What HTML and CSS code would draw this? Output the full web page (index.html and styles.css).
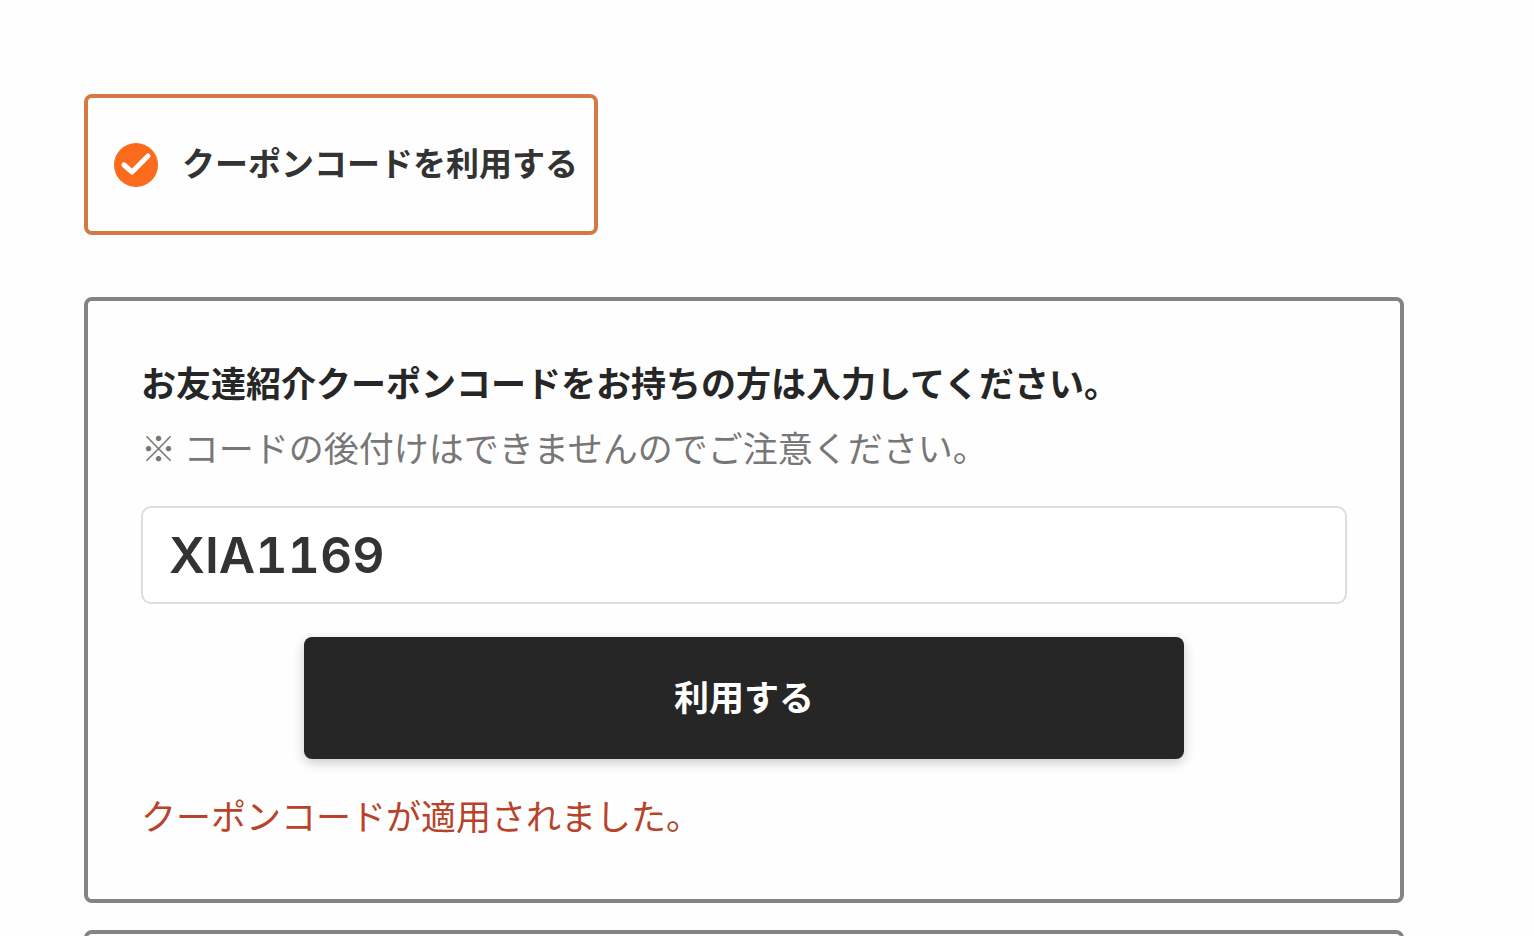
FILE: index.html
```html
<!DOCTYPE html>
<html lang="ja">
  <head>
    <meta charset="UTF-8">
    <meta name="viewport" content="width=device-width, initial-scale=1">
    <title>クーポンコード</title>
    <link rel="stylesheet" href="styles.css">
  </head>
  <body>
    <main class="container">
      <label class="coupon-toggle" for="use-coupon">
        <span class="check">
          <input class="check-input" type="checkbox" id="use-coupon" checked>
          <svg class="check-mark" viewBox="0 0 44 44" aria-hidden="true">
            <path d="M10 22 L18 29 L34 13" />
          </svg>
        </span>
        <span class="toggle-text">クーポンコードを利用する</span>
      </label>

      <form class="panel">
        <label class="panel-title" for="coupon-code">お友達紹介クーポンコードをお持ちの方は入力してください。</label>
        <p class="note">※ コードの後付けはできませんのでご注意ください。</p>
        <input class="code-input" type="text" id="coupon-code" value="XIA1169">
        <button class="apply-btn" type="button">利用する</button>
        <p class="message">クーポンコードが適用されました。</p>
      </form>

      <section class="panel"></section>
    </main>
  </body>
</html>
```

FILE: styles.css
```css
* {
  box-sizing: border-box;
}

body {
  margin: 0;
  background-color: #fefefe;
  color: #333;
  font-family: "Noto Sans CJK JP", sans-serif;
  font-size: 35px;
  line-height: 52px;
}

.container {
  display: flex;
  flex-direction: column;
  align-items: flex-start;
  padding: 94px 130px 0 84px;
}

.coupon-toggle {
  display: flex;
  align-items: center;
  gap: 24px;
  min-height: 141px;
  margin-bottom: 62px;
  padding: 0 16px 0 26px;
  border: 4px solid #d47844;
  border-radius: 8px;
  font-size: 33px;
  font-weight: 700;
  cursor: pointer;
}

.toggle-text {
  padding-bottom: 6px;
}

/* tick is stacked on top of the round checkbox */
.check {
  display: grid;
}

.check-input,
.check-mark {
  grid-area: 1 / 1;
  width: 44px;
  height: 44px;
  margin: 0;
}

.check-input {
  appearance: none;
  border-radius: 50%;
  background-color: #ccc;
}

.check-input:checked {
  background-color: #fc6a1c;
}

.check-mark {
  fill: none;
  stroke: #fff;
  stroke-width: 5;
  stroke-linecap: round;
  stroke-linejoin: round;
  pointer-events: none;
}

.panel {
  display: flex;
  flex-direction: column;
  width: 100%;
  margin-bottom: 27px;
  padding: 55px 53px 58px;
  border: 4px solid #848484;
  border-radius: 8px;
}

.panel-title {
  margin-bottom: 13px;
  color: #262626;
  font-weight: 700;
}

.note {
  margin: 0 0 33px;
  color: #777;
}

.code-input {
  width: 100%;
  height: 98px;
  margin-bottom: 33px;
  padding: 0 26px;
  border: 2px solid #ddd;
  border-radius: 10px;
  background-color: #fff;
  color: #333;
  font-family: Inter, "Noto Sans CJK JP", sans-serif;
  font-size: 50px;
  font-weight: 600;
  font-variant-numeric: tabular-nums;
}

.apply-btn {
  align-self: center;
  width: 73%;
  height: 122px;
  margin-bottom: 30px;
  padding: 0 0 6px;
  border: none;
  border-radius: 8px;
  background-color: #262626;
  box-shadow: 0 4px 12px rgba(0, 0, 0, 0.2);
  color: #fff;
  font-family: inherit;
  font-size: 35px;
  font-weight: 700;
  cursor: pointer;
}

.message {
  margin: 0;
  color: #b8432a;
}
```
